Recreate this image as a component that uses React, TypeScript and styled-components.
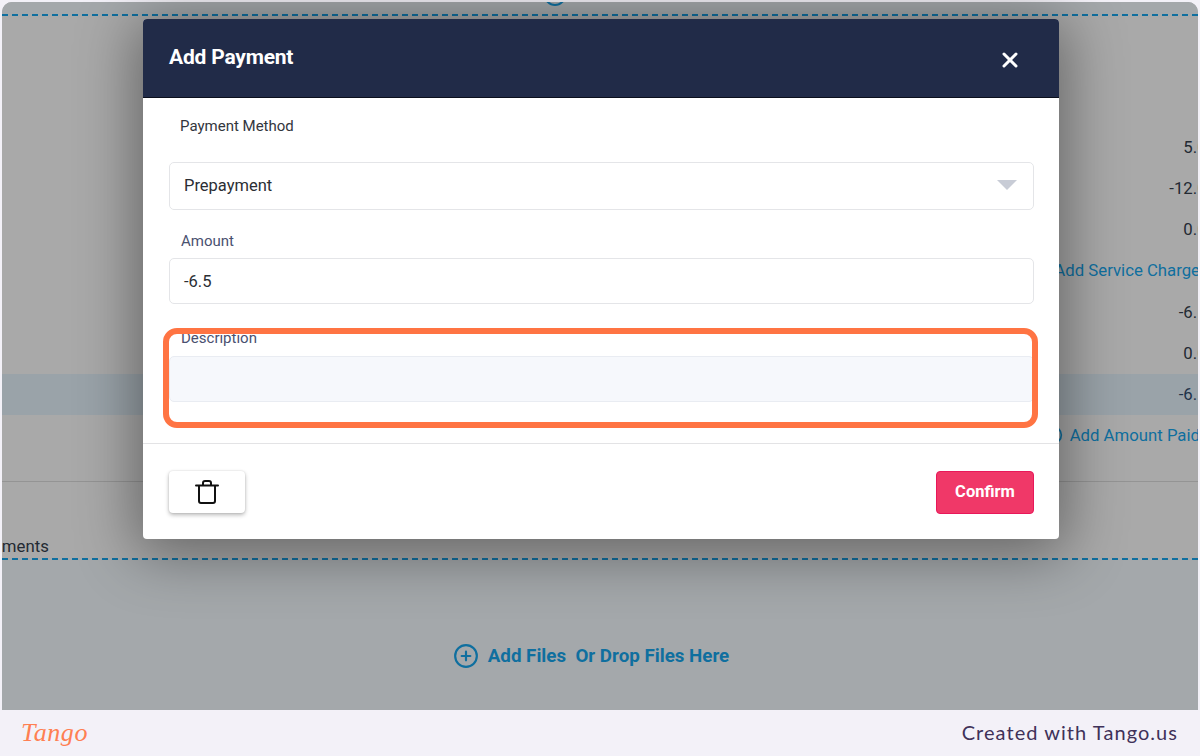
import styled, { createGlobalStyle } from "styled-components";
import { FiPlusCircle, FiX } from "react-icons/fi";

const GlobalStyle = createGlobalStyle`
  html, body {
    margin: 0;
    padding: 0;
    background: #f3f1f8;
    font-family: Roboto, "Liberation Sans", sans-serif;
  }
`;

const Frame = styled.div`
  width: 1200px;
  height: 756px;
  display: flex;
  flex-direction: column;
  overflow: hidden;
  position: relative;
`;

const Stage = styled.div`
  margin: 2px 2px 0;
  height: 708px;
  background: #a9a9a9;
  border-radius: 10px 10px 0 0;
  overflow: hidden;
  display: flex;
  flex-direction: column;
`;

const Strip = styled.div`
  height: 12px;
  background: #a4a8ab;
  border-bottom: 2px dashed #0f6f9f;
  display: flex;
  justify-content: center;
  flex-shrink: 0;
`;

const TopIcon = styled.span`
  display: block;
  height: 4px;
  margin-left: -90px;
  color: #0f6f9f;
  line-height: 0;

  svg {
    margin-top: -19px;
  }
`;

const Totals = styled.div`
  height: 466px;
  padding-top: 110px;
  box-sizing: border-box;
  border-bottom: 1px solid #949494;
  display: flex;
  flex-direction: column;
  flex-shrink: 0;
`;

const TotalRow = styled.div<{ $band?: boolean }>`
  height: 41.3px;
  display: flex;
  align-items: center;
  justify-content: flex-end;
  margin-right: -18px;
  padding-right: 0;
  background: ${(p) => (p.$band ? "#9aa3a9" : "transparent")};
  font-size: 16.75px;
  color: #232a33;
`;

const Value = styled.span<{ $dark?: boolean }>`
  color: ${(p) => (p.$dark ? "#1f3249" : "#232a33")};
`;

const LinkRow = styled.div`
  height: 41.3px;
  box-sizing: border-box;
  padding-bottom: 2px;
  display: flex;
  align-items: center;
  justify-content: flex-end;
  gap: 7px;
  margin-right: -2px;
  font-size: 16.75px;
  color: #0f6f9f;
  white-space: nowrap;

  svg {
    flex-shrink: 0;
  }
`;

const AttachLabel = styled.div`
  height: 76px;
  box-sizing: border-box;
  padding-top: 55px;
  font-size: 16.75px;
  line-height: 19px;
  color: #232a33;
  flex-shrink: 0;
  margin-left: -49px;
`;

const DropZone = styled.div`
  flex: 1;
  background: #a4a8ab;
  border-top: 2px dashed #0f6f9f;
  display: flex;
  align-items: center;
  justify-content: center;
  gap: 9px;
  padding: 41px 18px 0 0;
  box-sizing: border-box;
  color: #0f6f9f;
  font-size: 18.75px;
  font-weight: 700;
`;

const Footer = styled.footer`
  flex: 1;
  display: flex;
  align-items: center;
  justify-content: space-between;
  padding: 0 22px 0 21px;
`;

const TangoMark = styled.span`
  font-family: "Liberation Serif", serif;
  font-style: italic;
  font-size: 26px;
  letter-spacing: 0.6px;
  color: #ff7f52;
  line-height: 1;
`;

const Credit = styled.span`
  font-family: Lato, sans-serif;
  font-size: 20px;
  letter-spacing: 1.05px;
  color: #3f3159;
  margin-top: -2px;
`;

const Dialog = styled.section`
  position: absolute;
  left: 143px;
  top: 19px;
  width: 916px;
  height: 520px;
  background: #fff;
  border-radius: 4px;
  box-shadow: 0 8px 60px 6px rgba(0, 0, 0, 0.42);
  overflow: hidden;
  display: flex;
  flex-direction: column;
`;

const DialogHeader = styled.header`
  height: 79px;
  box-sizing: border-box;
  flex-shrink: 0;
  background: #212b48;
  border-bottom: 1px solid #0b0f1c;
  display: flex;
  align-items: center;
  justify-content: space-between;
  padding: 0 37px 0 26px;
  color: #fff;
`;

const DialogTitle = styled.h2`
  margin: 0 0 2px;
  font-size: 21px;
  font-weight: 700;
  letter-spacing: -0.2px;
`;

const CloseButton = styled.button`
  border: 0;
  padding: 0;
  margin-top: 4px;
  background: none;
  color: #fff;
  display: flex;

  svg {
    stroke-width: 3;
  }
`;

const DialogBody = styled.div`
  flex: 1;
  padding: 0 25px 0 26px;
  display: flex;
  flex-direction: column;
`;

const FieldLabel = styled.label<{ $plain?: boolean }>`
  display: block;
  font-size: 15px;
  line-height: 17px;
  padding-left: ${(p) => (p.$plain ? "11px" : "12px")};
  color: ${(p) => (p.$plain ? "#33363d" : "#4a5170")};
`;

const MethodLabel = styled(FieldLabel)`
  margin: 20px 0 27px;
`;

const Control = styled.div<{ $height: number; $muted?: boolean }>`
  height: ${(p) => p.$height}px;
  box-sizing: border-box;
  border: 1px solid ${(p) => (p.$muted ? "#e9ecf2" : "#e4e5e8")};
  border-radius: 5px;
  background: ${(p) => (p.$muted ? "#f6f8fc" : "#fff")};
  padding: 0 14px;
  display: flex;
  align-items: center;
  justify-content: space-between;
  font-size: 16.5px;
  color: #2b2e34;
`;

const SelectControl = styled(Control)`
  padding-bottom: 2px;
`;

const Caret = styled.span`
  width: 0;
  height: 0;
  margin-right: 2px;
  border-left: 10px solid transparent;
  border-right: 10px solid transparent;
  border-top: 10px solid #c8ccd6;
`;

const AmountField = styled.div`
  margin-top: 23px;

  ${FieldLabel} {
    margin-bottom: 8px;
  }
`;

const DescriptionField = styled.div`
  margin-top: 26px;
  position: relative;

  ${FieldLabel} {
    margin-bottom: 9px;
  }
`;

const Highlight = styled.div`
  position: absolute;
  left: -6px;
  right: -4px;
  top: -2px;
  height: 100px;
  border: 6px solid #ff7443;
  border-radius: 14px;
  box-sizing: border-box;
`;

const DialogFooter = styled.div`
  height: 96px;
  box-sizing: border-box;
  flex-shrink: 0;
  border-top: 1px solid #e3e3e5;
  padding: 27px 25px 0 26px;
  display: flex;
  justify-content: space-between;
  align-items: flex-start;
`;

const DeleteButton = styled.button`
  width: 76px;
  height: 42px;
  border: 0;
  border-radius: 4px;
  background: #fff;
  box-shadow: 0 2px 4px rgba(0, 0, 0, 0.28), 0 0 2px rgba(0, 0, 0, 0.12);
  display: flex;
  align-items: center;
  justify-content: center;
  padding: 0;
`;

const ConfirmButton = styled.button`
  width: 98px;
  height: 43px;
  border: 1px solid #e8185a;
  border-radius: 4px;
  background: #f03868;
  color: #fff;
  font-family: inherit;
  font-size: 16.5px;
  font-weight: 700;
  padding: 0 0 2px;
`;

const TrashIcon = () => (
  <svg width="26" height="26" viewBox="0 0 26 26" fill="none" stroke="#111" strokeWidth="2" strokeLinejoin="round">
    <path d="M2 6.5h22" strokeLinecap="round" />
    <path d="M5 6.5v15.5a2 2 0 0 0 2 2h12a2 2 0 0 0 2-2V6.5" />
    <path d="M9 6.5V4a2 2 0 0 1 2-2h4a2 2 0 0 1 2 2v2.5" />
  </svg>
);

export default function App() {
  return (
    <>
      <GlobalStyle />
      <Frame>
        <Stage>
          <Strip>
            <TopIcon>
              <FiPlusCircle size={24} />
            </TopIcon>
          </Strip>
          <Totals>
            <TotalRow>
              <Value>5.00</Value>
            </TotalRow>
            <TotalRow>
              <Value>-12.00</Value>
            </TotalRow>
            <TotalRow>
              <Value>0.00</Value>
            </TotalRow>
            <LinkRow>Add Service Charge</LinkRow>
            <TotalRow>
              <Value>-6.50</Value>
            </TotalRow>
            <TotalRow>
              <Value>0.00</Value>
            </TotalRow>
            <TotalRow $band>
              <Value $dark>-6.50</Value>
            </TotalRow>
            <LinkRow>
              <FiPlusCircle size={20} />
              Add Amount Paid
            </LinkRow>
          </Totals>
          <AttachLabel>Attachments</AttachLabel>
          <DropZone>
            <FiPlusCircle size={26} />
            <span>Add Files&nbsp; Or Drop Files Here</span>
          </DropZone>
        </Stage>
        <Footer>
          <TangoMark>Tango</TangoMark>
          <Credit>Created with Tango.us</Credit>
        </Footer>
        <Dialog>
          <DialogHeader>
            <DialogTitle>Add Payment</DialogTitle>
            <CloseButton aria-label="Close">
              <FiX size={24} />
            </CloseButton>
          </DialogHeader>
          <DialogBody>
            <MethodLabel $plain>Payment Method</MethodLabel>
            <SelectControl $height={48}>
              Prepayment
              <Caret />
            </SelectControl>
            <AmountField>
              <FieldLabel>Amount</FieldLabel>
              <Control $height={46}>-6.5</Control>
            </AmountField>
            <DescriptionField>
              <FieldLabel>Description</FieldLabel>
              <Control $height={46} $muted />
              <Highlight />
            </DescriptionField>
          </DialogBody>
          <DialogFooter>
            <DeleteButton aria-label="Delete">
              <TrashIcon />
            </DeleteButton>
            <ConfirmButton>Confirm</ConfirmButton>
          </DialogFooter>
        </Dialog>
      </Frame>
    </>
  );
}
